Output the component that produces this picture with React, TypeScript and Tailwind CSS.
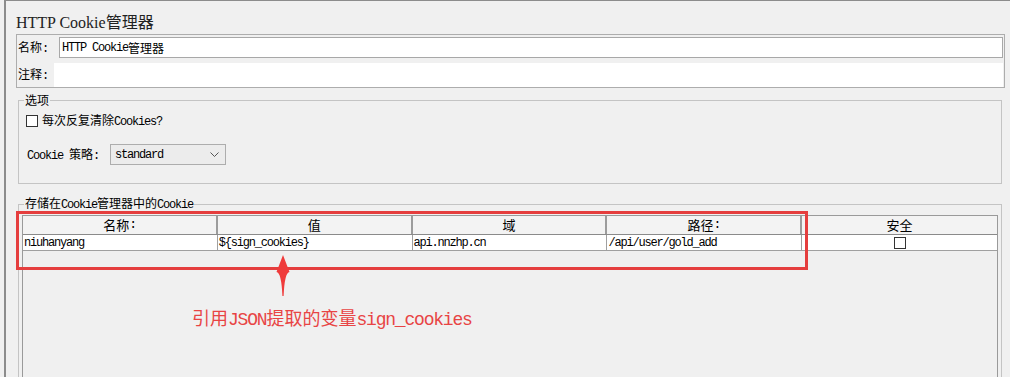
import React from "react";

// Splits text so ASCII runs get SimSun-like half-width advance
const Mx = ({ t, latin = "tracking-[-0.1em] font-[family-name:Liberation_Mono,monospace]" }: { t: string; latin?: string }) => {
  const parts = t.split(/([\x20-\x7e]+)/).filter(Boolean);
  return (
    <>
      {parts.map((p, i) =>
        /^[\x20-\x7e]+$/.test(p) ? (
          <span key={i} className={`${latin} whitespace-pre`}>
            {p}
          </span>
        ) : (
          <span key={i}>{p}</span>
        )
      )}
    </>
  );
};

const Check = () => (
  <div className="h-[12px] w-[12px] border border-[#333] bg-white" />
);

const cols = ["名称:", "值", "域", "路径:", "安全"];

const App = () => {
  return (
    <div className="relative h-[377px] w-[1010px] overflow-hidden bg-[#f0f0f0] font-[family-name:Noto_Sans_CJK_SC,sans-serif] text-[12px] text-black">
      <div className="ml-[4px] h-[400px] border-t border-l-2 border-[#8c8c8c] pr-[5px] pl-[10px]">
        <div className="h-[33px] pt-[10px] text-[16px] leading-[20px] text-[#222]">
          <Mx t="HTTP Cookie管理器" latin="whitespace-pre font-[family-name:Liberation_Serif,serif]" />
        </div>

        <div className="flex flex-col border border-[#adadad] px-[1px] pt-[2px]">
          <div className="flex h-[21px] items-center">
            <div className="w-[41px] leading-[14px]">
              <Mx t="名称:" />
            </div>
            <div className="flex h-[21px] flex-1 items-center border border-[#a8a8a8] bg-white pl-[2px] text-[12px]">
              <Mx t="HTTP Cookie管理器" />
            </div>
          </div>
          <div className="mt-[5px] flex h-[24px] items-center">
            <div className="w-[36px] leading-[14px]">
              <Mx t="注释:" />
            </div>
            <div className="h-[24px] flex-1 bg-white" />
          </div>
        </div>

        <fieldset className="mt-[5px] mr-[3px] ml-[2px] border border-[#c4c4c4] pb-[18px]">
          <legend className="ml-[5px] px-[1px] leading-[14px]">选项</legend>
          <div className="mt-[7px] flex h-[14px] items-center pl-[7px]">
            <Check />
            <span className="ml-[4px] leading-[14px]">
              <Mx t="每次反复清除Cookies?" />
            </span>
          </div>
          <div className="mt-[16px] flex h-[21px] items-center pl-[8px]">
            <div className="w-[83px] leading-[14px]">
              <Mx t="Cookie 策略:" />
            </div>
            <div className="flex h-[21px] w-[116px] items-center justify-between border border-[#adadad] bg-[#ececec] pr-[6px] pl-[4px]">
              <Mx t="standard" />
              <svg width="9" height="6" viewBox="0 0 9 6">
                <polyline points="0.5,0.5 4.5,4.5 8.5,0.5" fill="none" stroke="#555" strokeWidth="1" />
              </svg>
            </div>
          </div>
        </fieldset>

        <fieldset className="mt-[12px] mr-[3px] ml-[2px] h-[300px] border border-[#c4c4c4]">
          <legend className="ml-[5px] px-[1px] leading-[14px]">
            <Mx t="存储在Cookie管理器中的Cookie" />
          </legend>
          <div className="mx-[3px] mt-[3px] h-[260px] border border-[#9a9a9a]">
            <div className="grid h-[19px] grid-cols-5 border-b border-[#8a8a8a] bg-[#f3f3f3]">
              {cols.map((c, i) => (
                <div
                  key={c}
                  className={`flex items-center justify-center text-[13px] leading-[16px] ${i < 4 ? "border-r-2 border-[#9c9c9c]" : ""}`}
                >
                  <Mx t={c} />
                </div>
              ))}
            </div>
            <div className="grid h-[16px] grid-cols-5 border-b border-[#a0a0a0] bg-white">
              {["niuhanyang", "${sign_cookies}", "api.nnzhp.cn", "/api/user/gold_add"].map((v) => (
                <div key={v} className="flex items-center border-r border-[#a0a0a0] pl-[1px] leading-[14px]">
                  <Mx t={v} />
                </div>
              ))}
              <div className="flex items-center justify-center">
                <Check />
              </div>
            </div>
          </div>
        </fieldset>
      </div>

      {/* annotation overlay */}
      <div className="absolute top-[211px] left-[16px] h-[59px] w-[792px] border-[3px] border-[#e53e3e]" />
      <svg className="absolute top-[254px] left-[275px]" width="16" height="44" viewBox="0 0 16 44">
        <path d="M8 1 L14.5 18 Q9.6 18.5 8.6 42 L7.4 42 Q6.4 18.5 1.5 18 Z" fill="#ef3b3b" />
      </svg>
      <div className="absolute top-[306px] left-[192px] text-[18px] leading-[22px] text-[#e84444]">
        <Mx t="引用JSON提取的变量sign_cookies" latin="tracking-[-1.2px] font-[family-name:Liberation_Mono,monospace]" />
      </div>
    </div>
  );
};

export default App;
